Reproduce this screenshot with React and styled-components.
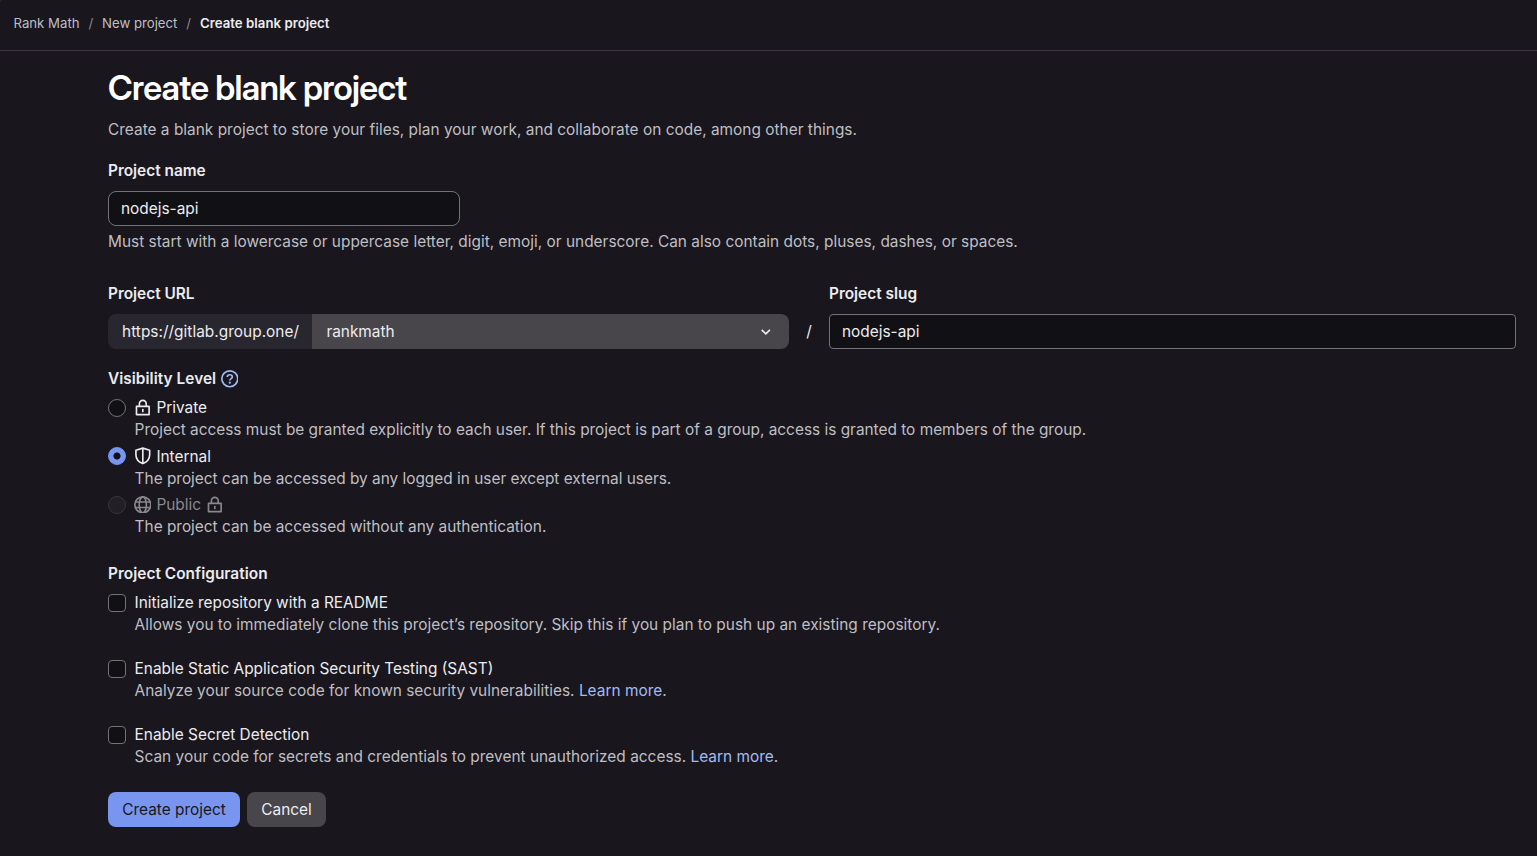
import React, { useState } from 'react';
import styled, { createGlobalStyle, css } from 'styled-components';

const GlobalStyle = createGlobalStyle`
  *, *::before, *::after {
    box-sizing: border-box;
  }

  body {
    margin: 0;
    background: #28252d;
    color: #ececef;
    font-family: Inter, 'Noto Sans', sans-serif;
    font-size: 15.4px;
    line-height: 22px;
  }
`;

const Panel = styled.div`
  min-height: 100vh;
  border-top-left-radius: 4px;
  background: #19161e;
`;

const TopBar = styled.header`
  height: 51px;
  padding: 0 13.5px 4px;
  display: flex;
  align-items: center;
  border-bottom: 1px solid #3e3448;
`;

const Crumbs = styled.ol`
  display: flex;
  margin: 0;
  padding: 0;
  list-style: none;
  font-size: 13.2px;
  line-height: 18px;
`;

const Crumb = styled.li`
  color: ${({ $current }) => ($current ? '#ececef' : '#bfbfc3')};
  font-weight: ${({ $current }) => ($current ? 600 : 400)};
  letter-spacing: ${({ $current }) => ($current ? 0.04 : 0)}px;

  li + &::before {
    content: '/';
    margin: 0 8.9px;
    color: #89888d;
    font-weight: 400;
  }
`;

const Main = styled.main`
  padding: 17px 21px 0 108px;
`;

const Title = styled.h1`
  margin: 0;
  color: #fff;
  font-family: 'Inter Display', Inter, sans-serif;
  font-variation-settings: 'opsz' 32;
  font-size: 34px;
  font-weight: 600;
  line-height: 40px;
  letter-spacing: -0.68px;
`;

const Lead = styled.p`
  margin: 11px 0 0;
  color: #bfbfc3;
  letter-spacing: 0.02px;
`;

const Label = styled.label`
  display: flex;
  align-items: center;
  margin-bottom: 9px;
  font-weight: 600;
`;

const Field = styled.div`
  margin-top: ${({ $top }) => $top || 0}px;
`;

const Input = styled.input`
  display: block;
  width: ${({ $width }) => $width || '100%'};
  height: 35px;
  padding: 0 12px;
  border: 1px solid #737278;
  border-radius: ${({ $radius }) => $radius || 8}px;
  background: #111014;
  color: #ececef;
  font: inherit;
  outline: none;
`;

const Help = styled.p`
  margin: 0;
  color: #bfbfc3;
  letter-spacing: 0.014px;
`;

const UrlRow = styled.div`
  display: grid;
  grid-template-columns: 681px 40px 1fr;
  align-items: end;
  margin-top: 30px;
`;

const InputGroup = styled.div`
  display: flex;
  height: 35px;
  border-radius: 8px;
  overflow: hidden;
`;

const Prefix = styled.div`
  display: flex;
  align-items: center;
  width: 204px;
  padding-left: 14px;
  background: #28262e;
  letter-spacing: 0.03px;
`;

const Select = styled.button`
  flex: 1;
  display: flex;
  align-items: center;
  justify-content: space-between;
  padding: 0 14px 0 14.4px;
  border: 0;
  background: #48454b;
  color: #ececef;
  font: inherit;
`;

const Slash = styled.span`
  height: 35px;
  line-height: 36px;
  text-align: center;
`;

const Section = styled.fieldset`
  min-width: 0;
  margin: ${({ $top }) => $top}px 0 0;
  padding: 0;
  border: 0;
`;

const Legend = styled.div`
  display: flex;
  align-items: center;
  gap: 4.6px;
  margin-bottom: 7px;
  font-weight: 600;
  letter-spacing: 0.04px;
`;

const HelpLink = styled.span`
  display: flex;
  color: #a2bbf5;
`;

const Options = styled.div`
  display: flex;
  flex-direction: column;
  gap: ${({ $gap }) => $gap}px;
`;

const Option = styled.label`
  display: grid;
  grid-template-columns: 18px 1fr;
  column-gap: 8.6px;
`;

const Control = styled.input`
  appearance: none;
  width: 18px;
  height: 18px;
  margin: 1.8px 0 0;
  border: 1px solid #737278;
  border-radius: ${({ type }) => (type === 'radio' ? '50%' : '4px')};
  background: #111014;

  &:checked {
    border-color: #7895ef;
    background: radial-gradient(circle, #111014 3.2px, #7895ef 3.9px);
  }

  &:disabled {
    border-color: #38353d;
    background: #221f27;
  }
`;

const OptionTitle = styled.span`
  display: flex;
  align-items: center;
  ${({ $disabled }) =>
    $disabled &&
    css`
      color: #89888d;
    `}
`;

const OptionIcon = styled.span`
  display: flex;
  margin: 0 5.2px 1px -1px;
`;

const TrailingIcon = styled.span`
  display: flex;
  margin: 0 0 0 5px;
`;

const OptionHelp = styled.span`
  grid-column: 2;
  color: #bfbfc3;
  letter-spacing: ${({ $spacing }) => $spacing || 0}px;
`;

const Link = styled.a`
  color: #a2bbf5;
  text-decoration: none;
`;

const Actions = styled.div`
  display: flex;
  gap: 7px;
  margin-top: 24px;
`;

const Button = styled.button`
  height: 35px;
  width: ${({ $primary }) => ($primary ? 132 : 79)}px;
  padding: 1px 0 0;
  border: 0;
  border-radius: 8px;
  background: ${({ $primary }) => ($primary ? '#7895ef' : '#48454b')};
  color: ${({ $primary }) => ($primary ? '#18171d' : '#ececef')};
  font: inherit;
`;

const Svg = ({ children, size = 17.6 }) => (
  <svg width={size} height={size} viewBox="0 0 16 16" fill="none" stroke="currentColor" strokeWidth="1.5">
    {children}
  </svg>
);

const LockIcon = () => (
  <Svg>
    <path d="M2.25 6.75h11.5v7.5H2.25zM4.9 6.5V4.35a3.1 3.1 0 0 1 6.2 0V6.5" strokeLinejoin="round" />
    <path d="M8 9v3" />
  </Svg>
);

const ShieldIcon = () => (
  <Svg>
    <path d="M8 1 14.25 2.9V7c0 3.8-2.8 6.7-6.25 8.1C4.55 13.7 1.75 10.8 1.75 7V2.9z" strokeLinejoin="round" />
    <path d="M8 1v14" />
  </Svg>
);

const EarthIcon = () => (
  <Svg>
    <circle cx="8" cy="8" r="7.25" />
    <ellipse cx="8" cy="8" rx="3.25" ry="7.25" />
    <path d="M1.5 5.5h13M1.5 10.5h13" />
  </Svg>
);

const QuestionIcon = () => (
  <Svg>
    <circle cx="8" cy="8" r="7.25" />
    <path d="M5.7 6.4c0-1.3 1-2.05 2.3-2.05s2.3.8 2.3 1.95c0 1.5-2.3 1.5-2.3 3.2" />
    <circle cx="8" cy="11.5" r="1" fill="currentColor" stroke="none" />
  </Svg>
);

const ChevronIcon = () => (
  <Svg>
    <path d="M4.25 6.25 8 9.9l3.75-3.65" />
  </Svg>
);

const levels = [
  {
    id: 'private',
    title: 'Private',
    icon: <LockIcon />,
    help: 'Project access must be granted explicitly to each user. If this project is part of a group, access is granted to members of the group.',
  },
  {
    id: 'internal',
    title: 'Internal',
    icon: <ShieldIcon />,
    help: 'The project can be accessed by any logged in user except external users.',
  },
  {
    id: 'public',
    title: 'Public',
    icon: <EarthIcon />,
    help: 'The project can be accessed without any authentication.',
    disabled: true,
  },
];

const settings = [
  {
    title: 'Initialize repository with a README',
    help: 'Allows you to immediately clone this project’s repository. Skip this if you plan to push up an existing repository.',
  },
  {
    title: 'Enable Static Application Security Testing (SAST)',
    help: 'Analyze your source code for known security vulnerabilities.',
    more: true,
  },
  {
    title: 'Enable Secret Detection',
    help: 'Scan your code for secrets and credentials to prevent unauthorized access.',
    more: true,
  },
];

const App = () => {
  const [level, setLevel] = useState('internal');
  const [name, setName] = useState('nodejs-api');
  const [slug, setSlug] = useState('nodejs-api');

  return (
    <Panel>
      <GlobalStyle />
      <TopBar>
        <Crumbs>
          <Crumb>Rank Math</Crumb>
          <Crumb>New project</Crumb>
          <Crumb $current>Create blank project</Crumb>
        </Crumbs>
      </TopBar>
      <Main>
        <Title>Create blank project</Title>
        <Lead>Create a blank project to store your files, plan your work, and collaborate on code, among other things.</Lead>
        <Field $top={19}>
          <Label htmlFor="name">Project name</Label>
          <Input id="name" $width="352px" value={name} onChange={(e) => setName(e.target.value)} />
        </Field>
        <Field $top={5}>
          <Help>
            Must start with a lowercase or uppercase letter, digit, emoji, or underscore. Can also contain dots, pluses,
            dashes, or spaces.
          </Help>
        </Field>
        <UrlRow>
          <Field>
            <Label>Project URL</Label>
            <InputGroup>
              <Prefix>https://gitlab.group.one/</Prefix>
              <Select type="button">
                rankmath
                <ChevronIcon />
              </Select>
            </InputGroup>
          </Field>
          <Slash>/</Slash>
          <Field>
            <Label htmlFor="slug">Project slug</Label>
            <Input id="slug" $radius={4} value={slug} onChange={(e) => setSlug(e.target.value)} />
          </Field>
        </UrlRow>
        <Section $top={19.2}>
          <Legend>
            Visibility Level
            <HelpLink>
              <QuestionIcon />
            </HelpLink>
          </Legend>
          <Options $gap={4.4}>
            {levels.map(({ id, title, icon, help, disabled }) => (
              <Option key={id}>
                <Control
                  type="radio"
                  name="level"
                  checked={level === id}
                  disabled={disabled}
                  onChange={() => setLevel(id)}
                />
                <OptionTitle $disabled={disabled}>
                  <OptionIcon>{icon}</OptionIcon>
                  {title}
                  {disabled && (
                    <TrailingIcon>
                      <LockIcon />
                    </TrailingIcon>
                  )}
                </OptionTitle>
                <OptionHelp>{help}</OptionHelp>
              </Option>
            ))}
          </Options>
        </Section>
        <Section $top={25}>
          <Legend>Project Configuration</Legend>
          <Options $gap={22}>
            {settings.map(({ title, help, more }) => (
              <Option key={title}>
                <Control type="checkbox" />
                <OptionTitle>{title}</OptionTitle>
                <OptionHelp $spacing={0.015}>
                  {help}
                  {more && (
                    <>
                      {' '}
                      <Link>Learn more</Link>.
                    </>
                  )}
                </OptionHelp>
              </Option>
            ))}
          </Options>
        </Section>
        <Actions>
          <Button $primary>Create project</Button>
          <Button>Cancel</Button>
        </Actions>
      </Main>
    </Panel>
  );
};

export default App;
